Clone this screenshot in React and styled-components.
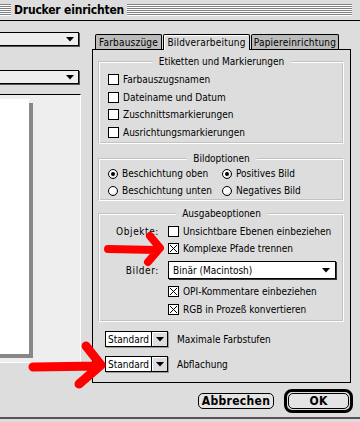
import React from "react";
import styled, { createGlobalStyle } from "styled-components";

const GlobalStyle = createGlobalStyle`
	html, body {
		margin: 0;
		padding: 0;
		background: #dddddd;
	}
`;

const Tri = () => (
	<svg width="8" height="5" viewBox="0 0 8 5">
		<path d="M0 0H8L4 4.5Z" fill="#000" />
	</svg>
);

const CheckBox = ({ checked }) => (
	<Box>
		{checked && (
			<svg width="9" height="9" viewBox="0 0 9 9">
				<path d="M1 1L8 8M8 1L1 8" stroke="#000" strokeWidth="1" />
			</svg>
		)}
	</Box>
);

const Check = ({ checked, children }) => (
	<Row>
		<CheckBox checked={checked} />
		<span>{children}</span>
	</Row>
);

const Option = ({ on, children }) => (
	<Row>
		<Radio $on={on} />
		<span>{children}</span>
	</Row>
);

const SmallPopup = ({ children }) => (
	<PopupRow>
		<Mini>
			<MiniText>Standard</MiniText>
			<MiniArrow>
				<Tri />
			</MiniArrow>
		</Mini>
		<span>{children}</span>
	</PopupRow>
);

const App = () => {
	return (
		<>
			<GlobalStyle />
			<Window>
				<TitleBar>
					<Stripes $w="11px" />
					<Title>Drucker einrichten</Title>
					<Stripes $grow />
				</TitleBar>
				<Main>
					<LeftPane>
						<SidePopup>
							<Tri />
						</SidePopup>
						<SidePopup $mt="24px">
							<Tri />
						</SidePopup>
						<Preview>
							<Page />
						</Preview>
					</LeftPane>
					<TabArea>
						<Tabs>
							<Tab $w={67}>Farbauszüge</Tab>
							<Tab $w={87} $active>
								Bildverarbeitung
							</Tab>
							<Tab $w={88}>Papiereinrichtung</Tab>
						</Tabs>
						<Panel>
							<Group $mt="12px" $pad="8px 8px 2px">
								<GroupTitle>Etiketten und Markierungen</GroupTitle>
								<Check>Farbauszugsnamen</Check>
								<Check>Dateiname und Datum</Check>
								<Check>Zuschnittsmarkierungen</Check>
								<Check>Ausrichtungsmarkierungen</Check>
							</Group>
							<Group $mt="15px" $pad="5px 8px 1px">
								<GroupTitle>Bildoptionen</GroupTitle>
								<RadioGrid>
									<Option on>Beschichtung oben</Option>
									<Option on>Positives Bild</Option>
									<Option>Beschichtung unten</Option>
									<Option>Negatives Bild</Option>
								</RadioGrid>
							</Group>
							<Group $mt="13px" $pad="8px 7px 3px 8px">
								<GroupTitle>Ausgabeoptionen</GroupTitle>
								<FormGrid>
									<Label>Objekte:</Label>
									<Check>Unsichtbare Ebenen einbeziehen</Check>
									<span />
									<Check checked>Komplexe Pfade trennen</Check>
									<Label $popup>Bilder:</Label>
									<BigPopup>
										<span>Binär (Macintosh)</span>
										<Tri />
									</BigPopup>
									<span />
									<Check checked>OPI-Kommentare einbeziehen</Check>
									<span />
									<Check checked>RGB in Prozeß konvertieren</Check>
								</FormGrid>
							</Group>
							<SmallPopup>Maximale Farbstufen</SmallPopup>
							<SmallPopup>Abflachung</SmallPopup>
						</Panel>
					</TabArea>
				</Main>
				<Footer>
					<Button>Abbrechen</Button>
					<DefaultRing>
						<Button $w="61px">OK</Button>
					</DefaultRing>
				</Footer>
				<BottomEdge />
				<Marks viewBox="0 0 360 422">
					<path
						d="M108 249 L157 250 M150 236 L160 248 L148 262"
						stroke="#ff0000"
						strokeWidth="8"
						fill="none"
						strokeLinecap="round"
						strokeLinejoin="round"
					/>
					<path
						d="M33 367 L100 366 M86 346 L101 365 L79 384"
						stroke="#ff0000"
						strokeWidth="9"
						fill="none"
						strokeLinecap="round"
						strokeLinejoin="round"
					/>
				</Marks>
			</Window>
		</>
	);
};

const Window = styled.div`
	position: relative;
	width: 360px;
	height: 422px;
	overflow: hidden;
	background: #dddddd;
	display: flex;
	flex-direction: column;
	font-family: "DejaVu Sans Condensed", "DejaVu Sans", sans-serif;
	font-size: 10px;
	color: #000;
`;

const TitleBar = styled.div`
	height: 21px;
	box-sizing: border-box;
	border-bottom: 1px solid #000;
	display: flex;
	align-items: center;
	gap: 3px;
	padding-right: 8px;
	flex: none;
`;

const Stripes = styled.div`
	height: 12px;
	width: ${(p) => p.$w || "auto"};
	flex: ${(p) => (p.$grow ? 1 : "none")};
	background: repeating-linear-gradient(
		to bottom,
		#808080 0 1px,
		#ffffff 1px 2px
	);
`;

const Title = styled.div`
	font-weight: bold;
	font-size: 12px;
	letter-spacing: -0.2px;
	line-height: 20px;
`;

const Main = styled.div`
	display: flex;
	align-items: flex-start;
	flex: none;
`;

const LeftPane = styled.div`
	margin-left: -20px;
	width: 101px;
	display: flex;
	flex-direction: column;
`;

const SidePopup = styled.div`
	margin-top: ${(p) => p.$mt || "11px"};
	width: 99px;
	height: 14px;
	box-sizing: border-box;
	border: 1px solid #000;
	background: #eeeeee;
	box-shadow: 1px 1px 0 #555;
	display: flex;
	align-items: center;
	justify-content: flex-end;
	padding-right: 4px;
`;

const Preview = styled.div`
	margin-top: 10px;
	height: 269px;
	box-sizing: border-box;
	border-top: 1px solid #000;
	border-right: 1px solid #fff;
	border-bottom: 1px solid #fff;
	background: #eeeeee;
	padding-top: 4px;
`;

const Page = styled.div`
	width: 49px;
	height: 255px;
	background: #fff;
	box-shadow: 4px 4px 0 #888;
`;

const TabArea = styled.div`
	margin-left: 11px;
	margin-top: 13px;
	width: 259px;
`;

const Tabs = styled.div`
	display: flex;
	align-items: flex-end;
	gap: 1px;
	height: 15px;
	margin-left: 3px;
	position: relative;
	z-index: 1;
`;

const Tab = styled.div`
	width: ${(p) => p.$w}px;
	height: ${(p) => (p.$active ? 16 : 15)}px;
	margin-bottom: ${(p) => (p.$active ? -1 : 0)}px;
	box-sizing: border-box;
	border: 1px solid #000;
	border-bottom: none;
	border-radius: 2px 2px 0 0;
	background: ${(p) => (p.$active ? "#dddddd" : "#bbbbbb")};
	box-shadow: ${(p) => (p.$active ? "inset 1px 1px 0 #fff" : "none")};
	display: flex;
	align-items: center;
	justify-content: center;
	padding-bottom: ${(p) => (p.$active ? 1 : 0)}px;
	letter-spacing: 0.2px;
	white-space: nowrap;
	overflow: hidden;
`;

const Panel = styled.div`
	height: 334px;
	box-sizing: border-box;
	border: 1px solid #000;
	padding: 0 6px 0 6px;
	display: flex;
	flex-direction: column;
`;

const Group = styled.div`
	position: relative;
	margin-top: ${(p) => p.$mt};
	padding: ${(p) => p.$pad};
	border: 1px solid #fff;
	box-shadow: -1px -1px 0 #c2c2c2, inset -1px -1px 0 #c2c2c2;
	display: flex;
	flex-direction: column;
	min-width: 0;
`;

const GroupTitle = styled.div`
	position: absolute;
	top: -8px;
	left: 50%;
	transform: translateX(-50%);
	background: #dddddd;
	padding: 0 7px;
	line-height: 14px;
	white-space: nowrap;
`;

const Row = styled.div`
	display: flex;
	align-items: center;
	gap: 4px;
	height: 17.5px;
	white-space: nowrap;
`;

const Box = styled.span`
	flex: none;
	width: 11px;
	height: 11px;
	box-sizing: border-box;
	border: 1px solid #000;
	background: #fff;
	display: inline-flex;
`;

const Radio = styled.span`
	flex: none;
	position: relative;
	width: 10px;
	height: 10px;
	box-sizing: border-box;
	border: 1px solid #000;
	border-radius: 50%;
	background: radial-gradient(circle at 35% 35%, #fff 0 40%, #c8c8c8 100%);
	&::after {
		content: "";
		display: ${(p) => (p.$on ? "block" : "none")};
		position: absolute;
		left: 2px;
		top: 2px;
		width: 4px;
		height: 4px;
		border-radius: 50%;
		background: #000;
	}
`;

const RadioGrid = styled.div`
	display: grid;
	grid-template-columns: 114px auto;
	grid-auto-rows: 17px;
	& > div {
		height: 17px;
	}
`;

const FormGrid = styled.div`
	display: grid;
	grid-template-columns: 51px minmax(0, 1fr);
	column-gap: 9px;
	align-items: center;
	& > div:nth-child(2),
	& > div:nth-child(4) {
		height: 17px;
	}
	& > div:nth-child(8),
	& > div:nth-child(10) {
		height: 18px;
	}
`;

const Label = styled.span`
	text-align: right;
	white-space: nowrap;
	letter-spacing: 0.6px;
	margin-top: ${(p) => (p.$popup ? "1px" : "0")};
`;

const BigPopup = styled.div`
	margin: 4px 0 3px;
	height: 18px;
	box-sizing: border-box;
	border: 1px solid #000;
	background: #fff;
	box-shadow: 1px 1px 0 #333;
	display: flex;
	align-items: center;
	justify-content: space-between;
	padding: 0 5px 0 4px;
	white-space: nowrap;
`;

const PopupRow = styled.div`
	display: flex;
	align-items: center;
	gap: 9px;
	margin: 9px 0 0 6px;
	white-space: nowrap;
`;

const Mini = styled.div`
	display: flex;
	height: 16px;
	box-sizing: border-box;
	border: 1px solid #000;
	box-shadow: 1px 1px 0 #999;
`;

const MiniText = styled.span`
	width: 46px;
	background: #fff;
	display: flex;
	align-items: center;
	padding-left: 2px;
	box-sizing: border-box;
	border-right: 1px solid #000;
	overflow: hidden;
`;

const MiniArrow = styled.span`
	width: 15px;
	background: #dddddd;
	box-shadow: inset 1px 1px 0 #fff;
	display: flex;
	align-items: center;
	justify-content: center;
`;

const Footer = styled.div`
	margin-top: 6px;
	height: 24px;
	display: flex;
	align-items: center;
	justify-content: flex-end;
	gap: 10px;
	padding-right: 7px;
	flex: none;
`;

const Button = styled.div`
	width: ${(p) => p.$w || "76px"};
	height: 16px;
	box-sizing: border-box;
	border: 1px solid #000;
	border-radius: 5px;
	background: #e4e4e4;
	display: flex;
	align-items: center;
	justify-content: center;
	font-weight: bold;
	font-size: 12px;
	letter-spacing: 0.3px;
`;

const DefaultRing = styled.div`
	width: 69px;
	height: 24px;
	box-sizing: border-box;
	border: 3px solid #000;
	border-radius: 8px;
	padding: 1px;
	display: flex;
`;

const BottomEdge = styled.div`
	margin-top: 4px;
	height: 2px;
	background: #555;
	flex: none;
`;

const Marks = styled.svg`
	position: absolute;
	left: 0;
	top: 0;
	width: 360px;
	height: 422px;
	pointer-events: none;
`;

export default App;
